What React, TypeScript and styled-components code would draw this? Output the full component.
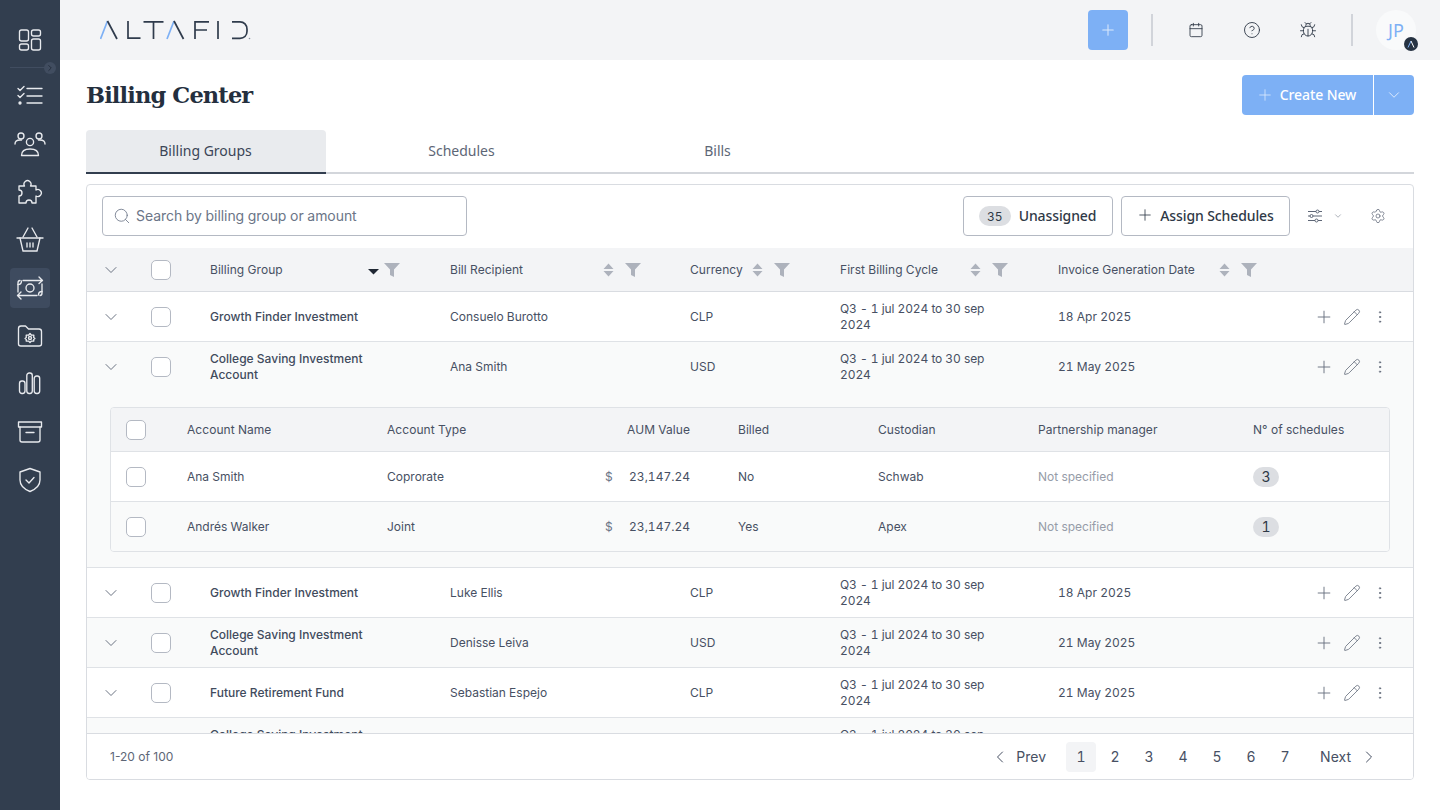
import React from 'react';
import styled, { createGlobalStyle } from 'styled-components';
import { Bug, Calendar, ChevronDown, ChevronLeft, ChevronRight, CircleHelp, EllipsisVertical, Pencil, Plus, Search, Settings } from 'lucide-react';

const GlobalStyle = createGlobalStyle`
    html, body {
        margin: 0;
        padding: 0;
        background: #ffffff;
    }
    * {
        box-sizing: border-box;
    }
`;

const Page = styled.div`
    width: 1440px;
    height: 810px;
    display: flex;
    overflow: hidden;
    font-family: Inter, "Liberation Sans", sans-serif;
    font-variant-numeric: tabular-nums;
    color: #3b4557;
`;

const Sidebar = styled.nav`
    width: 60px;
    flex-shrink: 0;
    background-color: #323e4f;
    padding-top: 16px;
    display: flex;
    flex-direction: column;
    align-items: center;
    position: relative;
`;

const SideItem = styled.div<{ $active?: boolean }>`
    width: 40px;
    height: 40px;
    margin: 4px 0;
    border-radius: 4px;
    display: flex;
    align-items: center;
    justify-content: center;
    color: #e8eaee;
    background-color: ${({ $active }) => ($active ? '#3e4b5f' : 'transparent')};
    &:first-child {
        margin-bottom: 12px;
    }
`;

const SideDivider = styled.div`
    position: absolute;
    top: 67px;
    left: 10px;
    width: 40px;
    height: 1px;
    background-color: #414d60;
`;

const SideToggle = styled.div`
    position: absolute;
    top: 62px;
    left: 44px;
    width: 12px;
    height: 12px;
    border-radius: 50%;
    background-color: #414d60;
    color: #1f2937;
    display: flex;
    align-items: center;
    justify-content: center;
`;

const Main = styled.div`
    flex: 1;
    min-width: 0;
    display: flex;
    flex-direction: column;
`;

const Header = styled.header`
    height: 60px;
    flex-shrink: 0;
    background-color: #f3f4f6;
    display: flex;
    align-items: center;
    padding: 0 24px 0 40px;
`;

const Logo = styled.svg`
    display: block;
`;

const HeaderRight = styled.div`
    margin-left: auto;
    display: flex;
    align-items: center;
`;

const QuickAdd = styled.div`
    width: 40px;
    height: 40px;
    border-radius: 4px;
    background-color: #7db0f5;
    color: #dbe9fc;
    display: flex;
    align-items: center;
    justify-content: center;
`;

const HeaderDivider = styled.div`
    width: 2px;
    height: 32px;
    background-color: #d1d4da;
    margin: 0 23px;
`;

const HeaderIcons = styled.div`
    display: flex;
    gap: 16px;
`;

const HeaderIcon = styled.div`
    width: 40px;
    height: 40px;
    display: flex;
    align-items: center;
    justify-content: center;
    color: #2f3947;
`;

const Avatar = styled.div`
    width: 40px;
    height: 40px;
    border-radius: 50%;
    background-color: #f9fafb;
    color: #7db0f5;
    font-family: "Noto Sans", sans-serif;
    font-size: 18px;
    display: flex;
    align-items: center;
    justify-content: center;
    position: relative;
`;

const AvatarBadge = styled.div`
    position: absolute;
    right: -2px;
    bottom: -1px;
    width: 14px;
    height: 14px;
    border-radius: 50%;
    background-color: #263242;
    display: flex;
    align-items: center;
    justify-content: center;
`;

const Content = styled.main`
    flex: 1;
    min-height: 0;
    padding: 0 26px 30px;
    display: flex;
    flex-direction: column;
`;

const TitleRow = styled.div`
    height: 70px;
    flex-shrink: 0;
    display: flex;
    align-items: center;
    justify-content: space-between;
`;

const Title = styled.h1`
    margin: 0;
    font-family: "DejaVu Serif", "Liberation Serif", serif;
    font-size: 22.5px;
    font-weight: 700;
    letter-spacing: -0.85px;
    color: #242f3e;
`;

const SplitButton = styled.div`
    display: flex;
    gap: 1px;
    color: #ffffff;
    font-family: "Noto Sans", sans-serif;
    font-size: 14px;
    font-weight: 500;
`;

const CreateButton = styled.div`
    width: 131px;
    height: 40px;
    background-color: #7db0f5;
    border-radius: 4px 0 0 4px;
    display: flex;
    align-items: center;
    justify-content: center;
    gap: 6px;
    color: #ffffff;
    letter-spacing: -0.1px;
    padding: 0 3px 1px 0;
    svg {
        color: #dbe9fc;
    }
`;

const CreateCaret = styled.div`
    width: 40px;
    height: 40px;
    background-color: #7db0f5;
    border-radius: 0 4px 4px 0;
    display: flex;
    align-items: center;
    justify-content: center;
    color: #e6f0fd;
`;

const Tabs = styled.div`
    height: 44px;
    flex-shrink: 0;
    display: flex;
    gap: 16px;
    border-bottom: 2px solid #d3d6db;
`;

const Tab = styled.div<{ $active?: boolean }>`
    width: 240px;
    height: 44px;
    display: flex;
    align-items: center;
    justify-content: center;
    font-family: "Noto Sans", sans-serif;
    font-size: 14px;
    padding: 0 1px 2px 0;
    color: ${({ $active }) => ($active ? '#3b4557' : '#5d6676')};
    background-color: ${({ $active }) => ($active ? '#e9ebee' : 'transparent')};
    border-radius: 4px 4px 0 0;
    border-bottom: 2px solid ${({ $active }) => ($active ? '#323e4f' : 'transparent')};
`;

const Card = styled.section`
    margin-top: 10px;
    flex: 1;
    min-height: 0;
    border: 1px solid #d9dce1;
    border-radius: 4px;
    display: flex;
    flex-direction: column;
    overflow: hidden;
`;

const Toolbar = styled.div`
    height: 63px;
    flex-shrink: 0;
    display: flex;
    align-items: center;
    padding: 0 15px 1px;
`;

const SearchBox = styled.div`
    width: 365px;
    height: 40px;
    border: 1px solid #b4b9c3;
    border-radius: 4px;
    display: flex;
    align-items: center;
    gap: 5px;
    padding: 0 10px 1px;
    font-size: 14px;
    letter-spacing: -0.06px;
    color: #6b7587;
`;

const ToolbarActions = styled.div`
    margin-left: auto;
    display: flex;
    align-items: center;
    gap: 8px;
`;

const OutlineButton = styled.div<{ $width: number }>`
    width: ${({ $width }) => $width}px;
    height: 40px;
    border: 1px solid #b4b9c3;
    border-radius: 4px;
    display: flex;
    align-items: center;
    justify-content: center;
    gap: 6px;
    font-family: "Noto Sans", sans-serif;
    font-size: 14px;
    font-weight: 500;
    letter-spacing: -0.1px;
    padding: 0 1px 2px 0;
    color: #2f3947;
`;

const CountPill = styled.span`
    width: 32px;
    height: 20px;
    margin: 2px 2px 0 0;
    border-radius: 10px;
    background-color: #dcdee2;
    font-family: Inter, sans-serif;
    font-size: 12px;
    font-weight: 400;
    letter-spacing: 0;
    display: flex;
    align-items: center;
    justify-content: center;
`;

const ToolIcons = styled.div`
    display: flex;
    align-items: center;
    color: #5d6676;
    margin-left: 17px;
    width: 91px;
`;

const ToolGear = styled.div`
    margin-left: auto;
    margin-right: 12px;
    display: flex;
`;

const ToolCaret = styled.div`
    margin-left: 10px;
    display: flex;
`;

const TableGrid = styled.div`
    display: grid;
    grid-template-columns: 64px 59px 240px 240px 150px 218px 1fr 103px;
    align-items: center;
`;

const HeadRow = styled(TableGrid)`
    height: 44px;
    flex-shrink: 0;
    background-color: #f3f4f6;
    border-bottom: 1px solid #d9dce1;
    font-size: 12px;
    letter-spacing: 0.05px;
    color: #475063;
`;

const Cell = styled.div`
    display: flex;
    align-items: center;
`;

const ChevronCell = styled(Cell)`
    justify-content: center;
    color: #5d6676;
    width: 48px;
`;

const HeadLabel = styled.span<{ $width: number }>`
    width: ${({ $width }) => $width}px;
    flex-shrink: 0;
    white-space: nowrap;
`;

const HeadIcons = styled.div<{ $gap: number }>`
    display: flex;
    align-items: center;
    gap: ${({ $gap }) => $gap}px;
`;

const CheckBox = styled.div`
    width: 20px;
    height: 20px;
    background-color: #ffffff;
    border: 1px solid #b4b9c3;
    border-radius: 5px;
`;

const Body = styled.div`
    flex: 1;
    min-height: 0;
    overflow: hidden;
`;

const RowGroup = styled.div<{ $tinted?: boolean }>`
    background-color: ${({ $tinted }) => ($tinted ? '#f9fafa' : '#ffffff')};
    border-bottom: 1px solid #dfe2e6;
`;

const DataRow = styled(TableGrid)`
    height: 49px;
    font-size: 12px;
    line-height: 16px;
    color: #475063;
`;

const GroupName = styled.div`
    font-weight: 500;
    color: #414b5d;
    max-width: 170px;
`;

const CycleText = styled.div`
    max-width: 160px;
    letter-spacing: -0.08px;
`;

const RowActions = styled.div`
    display: flex;
    align-items: center;
    gap: 8px;
    color: #666e7d;
    padding-left: 4px;
`;

const ActionIcon = styled.div`
    width: 20px;
    height: 20px;
    display: flex;
    align-items: center;
    justify-content: center;
`;

const Nested = styled.div`
    padding: 16px 23px 15px 23px;
`;

const NestedTable = styled.div`
    border: 1px solid #dfe2e6;
    border-radius: 4px;
    overflow: hidden;
    font-size: 12px;
    color: #475063;
`;

const NestedGrid = styled.div`
    display: grid;
    grid-template-columns: 76px 200px 218px 85px 48px 140px 160px 215px 1fr;
    align-items: center;
`;

const NestedHead = styled(NestedGrid)`
    height: 44px;
    background-color: #f3f4f6;
    border-bottom: 1px solid #dfe2e6;
    letter-spacing: 0.05px;
`;

const NestedRow = styled(NestedGrid)<{ $tinted?: boolean; $last?: boolean }>`
    height: ${({ $last }) => ($last ? '49px' : '50px')};
    background-color: ${({ $tinted }) => ($tinted ? '#f9fafa' : '#ffffff')};
    border-bottom: ${({ $last }) => ($last ? 'none' : '1px solid #dfe2e6')};
`;

const CheckCell = styled(Cell)`
    padding-left: 15px;
`;

const RightCell = styled(Cell)`
    justify-content: flex-end;
`;

const MoneyCell = styled(Cell)`
    justify-content: space-between;
`;

const Currency = styled.span`
    color: #6b7587;
`;

const Muted = styled.span`
    color: #969ca8;
`;

const SchedulePill = styled.span`
    width: 26px;
    height: 20px;
    border-radius: 10px;
    background-color: #dcdee2;
    color: #2f3947;
    font-size: 14px;
    display: flex;
    align-items: center;
    justify-content: center;
`;

const Footer = styled.div`
    height: 46px;
    flex-shrink: 0;
    border-top: 1px solid #d9dce1;
    display: flex;
    align-items: center;
    justify-content: space-between;
    padding: 0 34px 0 23px;
    background-color: #ffffff;
    font-size: 12px;
    color: #5d6676;
`;

const RangeText = styled.span`
    font-variant-numeric: normal;
`;

const Pager = styled.div`
    display: flex;
    align-items: center;
    gap: 4px;
    font-size: 14px;
    color: #475063;
`;

const PagerStep = styled.div<{ $side: 'prev' | 'next' }>`
    display: flex;
    align-items: center;
    gap: ${({ $side }) => ($side === 'prev' ? '6px' : '8px')};
    margin-right: ${({ $side }) => ($side === 'prev' ? '16px' : '0')};
    margin-left: ${({ $side }) => ($side === 'next' ? '16px' : '0')};
`;

const PageNumber = styled.div<{ $active?: boolean }>`
    width: 30px;
    height: 30px;
    border-radius: 4px;
    display: flex;
    align-items: center;
    justify-content: center;
    background-color: ${({ $active }) => ($active ? '#f3f4f6' : 'transparent')};
`;

const iconProps = {
    fill: 'none',
    stroke: 'currentColor',
    strokeWidth: 1.35,
    strokeLinecap: 'round' as const,
    strokeLinejoin: 'round' as const,
};

const DashboardIcon = () => (
    <svg width="24" height="24" viewBox="0 0 24 24" {...iconProps}>
        <rect x="1.5" y="2" width="9" height="11" rx="2" />
        <rect x="1.5" y="16" width="9" height="6" rx="2" />
        <rect x="13.5" y="2" width="9" height="6" rx="2" />
        <rect x="13.5" y="11" width="9" height="11" rx="2" />
    </svg>
);

const ChecklistIcon = () => (
    <svg width="26" height="22" viewBox="0 0 26 22" {...iconProps}>
        <path d="M1 3.5l2 2 4-4M1 10.5l2 2 4-4" />
        <circle cx="3" cy="18" r="1" fill="currentColor" />
        <path d="M10 3.5h15M10 11h15M10 18h15" />
    </svg>
);

const UsersIcon = () => (
    <svg width="32" height="26" viewBox="0 0 32 26" {...iconProps}>
        <circle cx="7" cy="5" r="3" />
        <circle cx="25" cy="5" r="3" />
        <circle cx="16" cy="11" r="3.6" />
        <path d="M1 13c0-2.500 2.200-4 5-4h1.500M31 13c0-2.500-2.200-4-5-4h-1.500" />
        <path d="M7.500 24.500c0-4 3-6.500 8.500-6.500s8.500 2.500 8.500 6.500z" />
    </svg>
);

const PuzzleIcon = () => (
    <svg width="26" height="26" viewBox="0 0 26 26" {...iconProps}>
        <path d="M2 7h5.500a3.500 3.500 0 1 1 6 0H19v4a3.500 3.500 0 1 1 0 6v7h-4a3 3 0 0 0-6 0H2v-7a3 3 0 0 0 0-6z" />
    </svg>
);

const BasketIcon = () => (
    <svg width="30" height="26" viewBox="0 0 30 26" {...iconProps}>
        <path d="M2 11h26" />
        <path d="M5 11l3 13h14l3-13" />
        <path d="M8 10l5-9M22 10l-5-9" />
        <path d="M12 16v4M15 16v4M18 16v4" />
    </svg>
);

const MoneyIcon = () => (
    <svg width="30" height="26" viewBox="0 0 30 26" {...iconProps}>
        <path d="M8 5.500h19M24 2l3.500 3.500-3.500 3" />
        <path d="M22 20.500H3M6 17l-3.500 3.500 3.500 3.500" />
        <path d="M3 17V8c0-1.500 1-2.500 2-2.500" />
        <path d="M27 9v9c0 1.500-1 2.500-2 2.500" />
        <path d="M3 9.500c2 0 3.500-1.500 3.500-3.500M27 16.500c-2 0-3.500 1.500-3.500 3.500" />
        <circle cx="15" cy="13" r="4" />
    </svg>
);

const FolderGearIcon = () => (
    <svg width="26" height="24" viewBox="0 0 26 24" {...iconProps}>
        <path d="M1.500 4.500c0-1.500 1-2.500 2.500-2.500h4.500l3 3H22c1.500 0 2.500 1 2.500 2.500V20c0 1.500-1 2-2.500 2H4c-1.500 0-2.500-.5-2.500-2z" />
        <path d="M13 9.500l1.500 1.700 2.300-.1-.1 2.400 1.200 1-1.200 1 .1 1.500-2.300.1L13 18.500l-1.500-1.400-2.300-.1.1-1.500-1.200-1 1.200-1-.1-2.400 2.300.1z" />
        <circle cx="13" cy="14" r="1.500" />
    </svg>
);

const BarsIcon = () => (
    <svg width="24" height="24" viewBox="0 0 24 24" {...iconProps}>
        <rect x="1.500" y="9" width="5.500" height="12.500" rx="2.400" />
        <rect x="8.800" y="1" width="5.500" height="20.500" rx="2.400" />
        <rect x="16.200" y="4" width="5.500" height="17.500" rx="2.400" />
    </svg>
);

const ArchiveIcon = () => (
    <svg width="26" height="24" viewBox="0 0 26 24" {...iconProps}>
        <path d="M1.500 2h23v5h-23z" />
        <path d="M3 7v13c0 1.200.8 2 2 2h16c1.200 0 2-.8 2-2V7" />
        <path d="M9 12.500h8" />
    </svg>
);

const ShieldIcon = () => (
    <svg width="24" height="26" viewBox="0 0 24 26" {...iconProps}>
        <path d="M12 1.500l10 3.500v8c0 5.500-5 9.500-10 11.500C7 22.500 2 18.500 2 13V5z" />
        <path d="M8 13l3 3 5-5.500" />
    </svg>
);

const SlidersIcon = () => (
    <svg width="16" height="14" viewBox="0 0 16 14" fill="none" stroke="currentColor" strokeWidth="1">
        <path d="M1 2.500h8M12 2.500h3M1 7h2M6 7h9M1 11.500h7M11 11.500h4" />
        <circle cx="10.500" cy="2.500" r="1.500" />
        <circle cx="4.500" cy="7" r="1.500" />
        <circle cx="9.500" cy="11.500" r="1.500" />
    </svg>
);

const SortIcon = ({ active }: { active?: boolean }) =>
    active ? (
        <svg width="11" height="14" viewBox="0 0 11 14">
            <path d="M0 6h11L5.500 11.500z" fill="#1f2733" />
        </svg>
    ) : (
        <svg width="11" height="14" viewBox="0 0 11 14">
            <path d="M5.500 0.500L10.500 6H0.500zM0.500 8h10L5.500 13.500z" fill="#adb2bc" />
        </svg>
    );

const FilterIcon = () => (
    <svg width="16" height="14" viewBox="0 0 16 14">
        <path d="M0 0h16L10 6.500V14l-4-2V6.500z" fill="#adb2bc" />
    </svg>
);

const AltafidLogo = () => (
    <Logo width="152" height="24" viewBox="0 0 152 24" fill="none" strokeWidth="1.700">
        <path d="M0.500 21L7.500 3" stroke="#7db0f5" />
        <path d="M7.500 3L17 21" stroke="#2f3b4c" />
        <path d="M28 3v17.200h12.500" stroke="#2f3b4c" />
        <path d="M43.500 3.800h20M53.500 3.800V21" stroke="#2f3b4c" />
        <path d="M67 21L74 3" stroke="#7db0f5" />
        <path d="M74 3l9.500 18" stroke="#2f3b4c" />
        <path d="M95 21V3.800h14M95 12h12" stroke="#2f3b4c" />
        <path d="M118 3v18" stroke="#2f3b4c" />
        <path d="M132 3.800h8c4 0 7 3.200 7 7.500v2c0 4.300-3 7-7 7h-8" stroke="#2f3b4c" />
        <circle cx="149.500" cy="20.500" r="0.800" fill="#8a93a0" />
    </Logo>
);

const sideIcons = [
    <DashboardIcon key="dashboard" />,
    <ChecklistIcon key="tasks" />,
    <UsersIcon key="users" />,
    <PuzzleIcon key="puzzle" />,
    <BasketIcon key="basket" />,
    <MoneyIcon key="money" />,
    <FolderGearIcon key="folder" />,
    <BarsIcon key="bars" />,
    <ArchiveIcon key="archive" />,
    <ShieldIcon key="shield" />,
];

const columns = [
    { label: 'Billing Group', width: 158, gap: 5, active: true },
    { label: 'Bill Recipient', width: 153, gap: 11 },
    { label: 'Currency', width: 62, gap: 11 },
    { label: 'First Billing Cycle', width: 130, gap: 11 },
    { label: 'Invoice Generation Date', width: 161, gap: 11 },
];

const rows = [
    { name: 'Growth Finder Investment', recipient: 'Consuelo Burotto', currency: 'CLP', date: '18 Apr 2025' },
    { name: 'College Saving Investment Account', recipient: 'Ana Smith', currency: 'USD', date: '21 May 2025', expanded: true, tinted: true },
    { name: 'Growth Finder Investment', recipient: 'Luke Ellis', currency: 'CLP', date: '18 Apr 2025' },
    { name: 'College Saving Investment Account', recipient: 'Denisse Leiva', currency: 'USD', date: '21 May 2025', tinted: true },
    { name: 'Future Retirement Fund', recipient: 'Sebastian Espejo', currency: 'CLP', date: '21 May 2025' },
    { name: 'College Saving Investment Account', recipient: 'Ana Smith', currency: 'USD', date: '21 May 2025', tinted: true },
];

const accounts = [
    { name: 'Ana Smith', type: 'Coprorate', billed: 'No', custodian: 'Schwab', schedules: 3 },
    { name: 'Andrés Walker', type: 'Joint', billed: 'Yes', custodian: 'Apex', schedules: 1 },
];

const App: React.FC = () => {
    return (
        <Page>
            <GlobalStyle />
            <Sidebar>
                {sideIcons.map((icon, index) => (
                    <SideItem key={index} $active={index === 5}>
                        {icon}
                    </SideItem>
                ))}
                <SideDivider />
                <SideToggle>
                    <ChevronRight size={10} strokeWidth={2} />
                </SideToggle>
            </Sidebar>
            <Main>
                <Header>
                    <AltafidLogo />
                    <HeaderRight>
                        <QuickAdd>
                            <Plus size={18} strokeWidth={1.4} />
                        </QuickAdd>
                        <HeaderDivider />
                        <HeaderIcons>
                            <HeaderIcon>
                                <Calendar size={16} strokeWidth={1.3} />
                            </HeaderIcon>
                            <HeaderIcon>
                                <CircleHelp size={18} strokeWidth={1.2} />
                            </HeaderIcon>
                            <HeaderIcon>
                                <Bug size={18} strokeWidth={1.2} />
                            </HeaderIcon>
                        </HeaderIcons>
                        <HeaderDivider />
                        <Avatar>
                            JP
                            <AvatarBadge>
                                <svg width="8" height="8" viewBox="0 0 8 8" fill="none" strokeWidth="1">
                                    <path d="M1 7.500L4 1" stroke="#7db0f5" />
                                    <path d="M4 1l3 6.500" stroke="#ffffff" />
                                </svg>
                            </AvatarBadge>
                        </Avatar>
                    </HeaderRight>
                </Header>
                <Content>
                    <TitleRow>
                        <Title>Billing Center</Title>
                        <SplitButton>
                            <CreateButton>
                                <Plus size={18} strokeWidth={1.1} />
                                Create New
                            </CreateButton>
                            <CreateCaret>
                                <ChevronDown size={18} strokeWidth={1.2} />
                            </CreateCaret>
                        </SplitButton>
                    </TitleRow>
                    <Tabs>
                        <Tab $active>Billing Groups</Tab>
                        <Tab>Schedules</Tab>
                        <Tab>Bills</Tab>
                    </Tabs>
                    <Card>
                        <Toolbar>
                            <SearchBox>
                                <Search size={18} strokeWidth={1.1} />
                                Search by billing group or amount
                            </SearchBox>
                            <ToolbarActions>
                                <OutlineButton $width={150}>
                                    <CountPill>35</CountPill>
                                    Unassigned
                                </OutlineButton>
                                <OutlineButton $width={169}>
                                    <Plus size={18} strokeWidth={1.1} />
                                    Assign Schedules
                                </OutlineButton>
                            </ToolbarActions>
                            <ToolIcons>
                                <SlidersIcon />
                                <ToolCaret>
                                    <ChevronDown size={10} strokeWidth={1.2} />
                                </ToolCaret>
                                <ToolGear>
                                    <Settings size={16} strokeWidth={1.1} />
                                </ToolGear>
                            </ToolIcons>
                        </Toolbar>
                        <HeadRow>
                            <ChevronCell>
                                <ChevronDown size={20} strokeWidth={1.1} />
                            </ChevronCell>
                            <Cell>
                                <CheckBox />
                            </Cell>
                            {columns.map((column) => (
                                <Cell key={column.label}>
                                    <HeadLabel $width={column.width}>{column.label}</HeadLabel>
                                    <HeadIcons $gap={column.gap}>
                                        <SortIcon active={column.active} />
                                        <FilterIcon />
                                    </HeadIcons>
                                </Cell>
                            ))}
                            <Cell />
                        </HeadRow>
                        <Body>
                            {rows.map((row, index) => (
                                <RowGroup key={index} $tinted={row.tinted}>
                                    <DataRow>
                                        <ChevronCell>
                                            <ChevronDown size={20} strokeWidth={1.1} />
                                        </ChevronCell>
                                        <Cell>
                                            <CheckBox />
                                        </Cell>
                                        <GroupName>{row.name}</GroupName>
                                        <Cell>{row.recipient}</Cell>
                                        <Cell>{row.currency}</Cell>
                                        <CycleText>Q3 - 1 jul 2024 to 30 sep 2024</CycleText>
                                        <Cell>{row.date}</Cell>
                                        <RowActions>
                                            <ActionIcon>
                                                <Plus size={20} strokeWidth={1.1} />
                                            </ActionIcon>
                                            <ActionIcon>
                                                <Pencil size={18} strokeWidth={1.1} />
                                            </ActionIcon>
                                            <ActionIcon>
                                                <EllipsisVertical size={16} strokeWidth={1.5} />
                                            </ActionIcon>
                                        </RowActions>
                                    </DataRow>
                                    {row.expanded && (
                                        <Nested>
                                            <NestedTable>
                                                <NestedHead>
                                                    <CheckCell>
                                                        <CheckBox />
                                                    </CheckCell>
                                                    <Cell>Account Name</Cell>
                                                    <Cell>Account Type</Cell>
                                                    <RightCell>AUM Value</RightCell>
                                                    <Cell />
                                                    <Cell>Billed</Cell>
                                                    <Cell>Custodian</Cell>
                                                    <Cell>Partnership manager</Cell>
                                                    <Cell>N° of schedules</Cell>
                                                </NestedHead>
                                                {accounts.map((account, accountIndex) => (
                                                    <NestedRow key={account.name} $tinted={accountIndex === 1} $last={accountIndex === 1}>
                                                        <CheckCell>
                                                            <CheckBox />
                                                        </CheckCell>
                                                        <Cell>{account.name}</Cell>
                                                        <Cell>{account.type}</Cell>
                                                        <MoneyCell>
                                                            <Currency>$</Currency>
                                                            23,147.24
                                                        </MoneyCell>
                                                        <Cell />
                                                        <Cell>{account.billed}</Cell>
                                                        <Cell>{account.custodian}</Cell>
                                                        <Muted>Not specified</Muted>
                                                        <Cell>
                                                            <SchedulePill>{account.schedules}</SchedulePill>
                                                        </Cell>
                                                    </NestedRow>
                                                ))}
                                            </NestedTable>
                                        </Nested>
                                    )}
                                </RowGroup>
                            ))}
                        </Body>
                        <Footer>
                            <RangeText>1-20 of 100</RangeText>
                            <Pager>
                                <PagerStep $side="prev">
                                    <ChevronLeft size={20} strokeWidth={1.2} />
                                    Prev
                                </PagerStep>
                                {[1, 2, 3, 4, 5, 6, 7].map((page) => (
                                    <PageNumber key={page} $active={page === 1}>
                                        {page}
                                    </PageNumber>
                                ))}
                                <PagerStep $side="next">
                                    Next
                                    <ChevronRight size={20} strokeWidth={1.2} />
                                </PagerStep>
                            </Pager>
                        </Footer>
                    </Card>
                </Content>
            </Main>
        </Page>
    );
};

export default App;
